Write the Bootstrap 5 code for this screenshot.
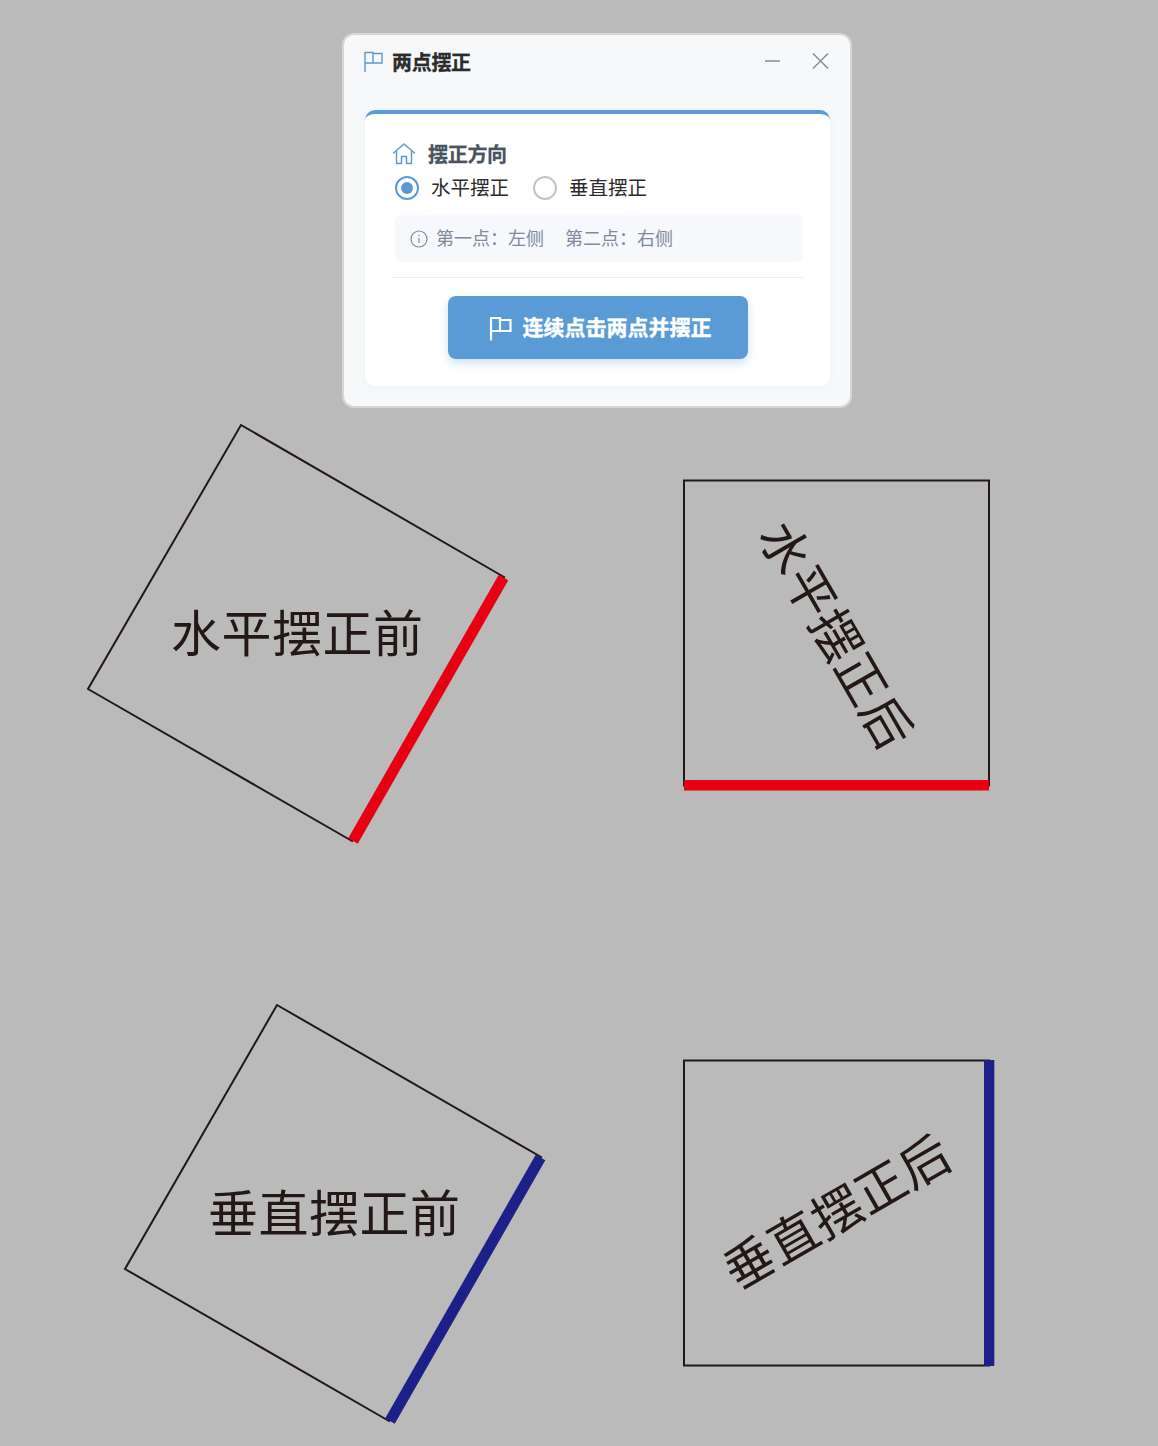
<!doctype html>
<html lang="zh"><head><meta charset="utf-8"><title>两点摆正</title>
<link href="https://cdn.jsdelivr.net/npm/bootstrap@5.3.0/dist/css/bootstrap.min.css" rel="stylesheet">
<style>
html,body{margin:0;height:1446px;overflow:hidden}
body{background:#bababa;position:relative;font-family:"Noto Sans CJK SC","Liberation Sans",sans-serif;color:#222}
.dlg{position:absolute;left:342px;top:33px;width:510px;height:375px;background:#f6f8fa;border:2px solid #d6d6d6;border-radius:12px}
.dlg-head{height:52px;padding:0 18px 0 20px}
.dlg-title{font-size:20px;font-weight:700;color:#2b2b2b;letter-spacing:-.3px;line-height:1;padding-top:2px;-webkit-text-stroke:.3px #2b2b2b}
.winbtn{background:none;border:0;padding:0;line-height:0}
.panel{margin:23px 20px 0 21px;height:276px;background:#fff;border-top:4px solid #5b9bd5;border-radius:10px;padding:27px 27px 0 27px;box-shadow:0 2px 10px rgba(0,0,0,.03)}
.sect{font-size:20px;font-weight:700;color:#4a5360;line-height:26px;letter-spacing:-.3px;-webkit-text-stroke:.3px #4a5360}
.radio-row{font-size:19.5px;color:#2b2b2b;line-height:26px;height:26px;margin-top:8px;padding-left:3px}
.rdo{width:24px;height:24px;border-radius:50%;border:2px solid #c4c4c4;display:inline-block;flex:none}
.rdo.on{border-color:#5b9bd5;position:relative}
.rdo.on::after{content:"";position:absolute;left:4px;top:4px;width:12px;height:12px;border-radius:50%;background:#5b9bd5}
.rdo-label{padding-bottom:2px}
.hint{margin:14px 0 0 3px;height:47px;background:#f6f8fb;border-radius:6px;padding:0 15px;font-size:18px;color:#808a9a}
.hint-txt{padding-bottom:2px}
.hint-gap{margin-right:21px}
.sep{margin-top:15px;border-top:1px solid #eceef1}
.go{display:flex;align-items:center;justify-content:center;gap:10px;width:300px;height:63px;margin:18px auto 0;padding:0 0 0 5px;background:#5b9bd5;color:#fff;border:0;border-radius:8px;font-size:21px;font-weight:700;box-shadow:0 4px 10px rgba(91,155,213,.3)}
.go-txt{padding-bottom:2px;-webkit-text-stroke:.4px #fff}
.stage{position:absolute;left:0;top:0;width:1158px;height:1446px}
.stage text{font-family:"Noto Sans CJK SC",sans-serif;font-size:50px;letter-spacing:.5px;fill:#231815}
</style></head><body>
<svg class="stage" viewBox="0 0 1158 1446" xmlns="http://www.w3.org/2000/svg">
<rect x="684" y="480.500" width="305" height="305" fill="none" stroke="#231815" stroke-width="2"/>
<rect x="684" y="780" width="305" height="10.500" fill="#e60012"/>
<rect x="684" y="1060.500" width="305" height="305" fill="none" stroke="#231815" stroke-width="2"/>
<rect x="984" y="1060" width="10.300" height="306" fill="#1d2088"/>
<polygon points="241,425 504,577 352,841 88,689" fill="none" stroke="#231815" stroke-width="2"/>
<line x1="503.500" y1="577.500" x2="353" y2="841" stroke="#e60012" stroke-width="11"/>
<polygon points="277,1005 541,1157 389,1421 125,1269" fill="none" stroke="#231815" stroke-width="2"/>
<line x1="540.500" y1="1157.500" x2="390" y2="1421" stroke="#1d2088" stroke-width="11"/>
<text x="171" y="652">水平摆正前</text>
<text x="208" y="1232">垂直摆正前</text>
<text transform="translate(757 535) rotate(60)" x="0" y="0">水平摆正后</text>
<text transform="translate(737 1291) rotate(-30)" x="0" y="0">垂直摆正后</text>
</svg>
<div class="dlg">
  <div class="dlg-head d-flex align-items-center">
    <svg width="20" height="24" viewBox="0 0 20 24" fill="none" stroke="#5b9bd5" stroke-width="1.400" class="me-2"><path d="M1 3V23M1 3.500H9V14H1M9 4.500H18V14H9"/></svg>
    <span class="dlg-title">两点摆正</span>
    <button class="winbtn ms-auto me-4"><svg width="24" height="24" viewBox="0 0 24 24" stroke="#8c8c8c" stroke-width="1.500"><path d="M5 12H20"/></svg></button>
    <button class="winbtn"><svg width="24" height="24" viewBox="0 0 24 24" stroke="#8c8c8c" stroke-width="1.500" fill="none"><path d="M5 4.500L20 19.500M20 4.500L5 19.500"/></svg></button>
  </div>
  <div class="panel">
    <div class="sect d-flex align-items-center gap-2">
      <svg width="24" height="24" viewBox="0 0 24 24" fill="none" stroke="#5b9bd5" stroke-width="1.500" stroke-linejoin="round" stroke-linecap="round"><path d="M1.500 11L12 2L22.500 11M4.500 9V21.500H9.500V14.500H14.500V21.500H19.500V9"/></svg>
      <span class="ms-1">摆正方向</span>
    </div>
    <div class="radio-row d-flex align-items-center">
      <span class="rdo on"></span><span class="rdo-label ms-2 me-4 ps-1">水平摆正</span>
      <span class="rdo"></span><span class="rdo-label ms-2 ps-1">垂直摆正</span>
    </div>
    <div class="hint d-flex align-items-center">
      <svg width="18" height="18" viewBox="0 0 18 18" fill="none" stroke="#808a9a" stroke-width="1.200" class="me-2"><circle cx="9" cy="9" r="8"/><path d="M9 8V13M9 5V6.300"/></svg>
      <span class="hint-txt hint-gap">第一点：左侧</span><span class="hint-txt">第二点：右侧</span>
    </div>
    <div class="sep"></div>
    <button class="go">
      <svg width="24" height="26" viewBox="0 0 24 26" fill="none" stroke="#fff" stroke-width="2.200"><path d="M2 2V25.500M2 3H11V16H2M11 5H21.500V16H11"/></svg>
      <span class="go-txt">连续点击两点并摆正</span>
    </button>
  </div>
</div>
<script src="https://cdn.jsdelivr.net/npm/bootstrap@5.3.0/dist/js/bootstrap.bundle.min.js"></script>
</body></html>
